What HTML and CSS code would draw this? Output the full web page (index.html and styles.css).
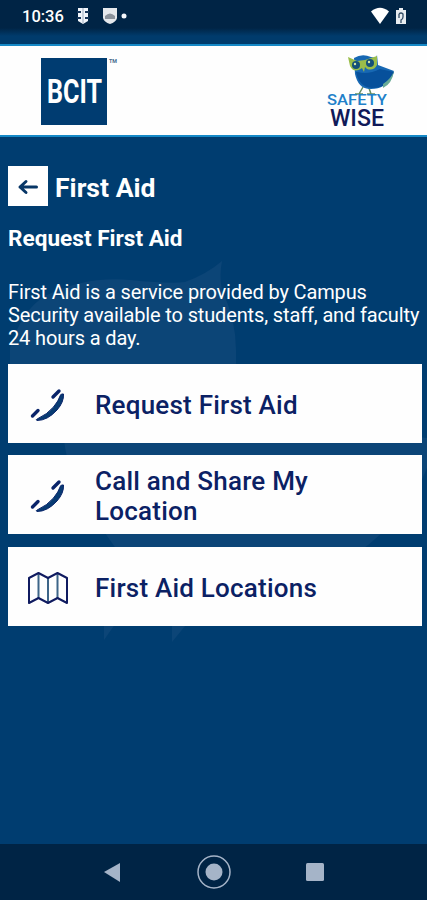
FILE: index.html
```html
<!DOCTYPE html>
<html lang="en">

<head>
    <meta charset="UTF-8">
    <meta name="viewport" content="width=device-width, initial-scale=1.0">
    <title>BCIT Safety Wise - First Aid</title>
    <link rel="stylesheet" href="styles.css">
</head>

<body>
    <div class="status-bar">
        <span class="clock">10:36</span>
        <svg class="status-icons" width="52" height="20" viewBox="0 0 52 20">
            <path d="M1 1h10v13l-5 3-5-3z" fill="#f1f5fa" />
            <path d="M0 5h4M8 5h4M0 11h4M8 11h4" stroke="#17365a" stroke-width="2" />
            <path d="M6 1v15" stroke="#9dabbd" stroke-width="1" />
            <path d="M26 1h14v10q-1 4-7 6-6-2-7-6z" fill="#e5e8ec" />
            <path d="M28 9q5-5 10 0v3H28z" fill="#8b929b" />
            <circle cx="47" cy="9" r="2.500" fill="#f4f7fb" />
        </svg>
        <svg class="status-right" width="36" height="20" viewBox="0 0 36 20">
            <path d="M0 4.500Q9-3 18 4.500L9 17z" fill="#fff" />
            <path d="M28 1h4v2h3v14H25V3h3z" fill="#e9edf1" />
            <path d="M28 7q2-2 4 0v3q0 2-2 3v3M28 7v4" fill="none" stroke="#334c65" stroke-width="1.300" />
        </svg>
    </div>

    <header class="header">
        <svg class="bcit-logo" width="78" height="70" viewBox="0 0 78 70">
            <rect y="2" width="66" height="67" fill="#003c71" />
            <text class="bcit-text" x="6" y="47" textLength="55" lengthAdjust="spacingAndGlyphs">BCIT</text>
            <text class="tm" x="68" y="7" textLength="8" lengthAdjust="spacingAndGlyphs">TM</text>
        </svg>
        <svg class="safety-logo" width="74" height="80" viewBox="0 0 74 80">
            <path d="M37 34l-4 7M43 35l2 6M29 41h8M41 41h8" stroke="#648d62" stroke-width="1.500" fill="none" />
            <path d="M28 5Q36 0 45 4l5 1 1-3 1 10 16 6-2 5q-7 14-23 13-11-1-14-15z" fill="#1768b3" />
            <path d="M32 19q10 3 22-3l14 3q-5 16-22 16-13-1-16-16z" fill="#07509b" />
            <path d="M57 31q8-5 11-13-2 13-11 17z" fill="#68aa96" />
            <path d="M22 4l9 4 8-1 12-4v9q-3 6-10 4l-2-2-1 5-2-4q-8 6-12-2z" fill="#9abd4a" />
            <circle cx="30" cy="12" r="4" fill="#145079" />
            <circle cx="44" cy="10" r="4" fill="#145079" />
            <circle cx="29" cy="11" r="1.200" fill="#d7e8a4" />
            <circle cx="43" cy="9" r="1.200" fill="#d7e8a4" />
            <text class="safety-text" x="1" y="52" textLength="60" lengthAdjust="spacingAndGlyphs">SAFETY</text>
            <text class="wise-text" x="4" y="73" textLength="54" lengthAdjust="spacingAndGlyphs">WISE</text>
        </svg>
    </header>

    <main class="content">
        <!-- faint owl behind the page -->
        <svg class="owl" width="427" height="400" viewBox="0 0 427 400">
            <path d="M222 11Q219 26 222 40q14 30 14 60v16l80 60 111 12v30q-20 50-72 87L344 310H124L105 283Q70 240 64 190L10 118V98Q22 60 45 46q40-20 85-16 40 4 55 2 22-8 37-21z" />
            <path d="M104 370h14l-14 20zM172 370h18l-18 22z" />
        </svg>

        <div class="title-row">
            <button class="back" aria-label="Back">
                <svg width="22" height="20" viewBox="0 0 22 20">
                    <path d="M19.500 10H3M9 4.500L3 10l6 5.500" />
                </svg>
            </button>
            <h1>First Aid</h1>
        </div>
        <h2>Request First Aid</h2>
        <p>First Aid is a service provided by Campus<br>Security available to students, staff, and faculty<br>24 hours a day.</p>

        <div class="menu">
            <button class="menu-item">
                <svg class="menu-icon" width="40" height="40" viewBox="0 0 40 40">
                    <path class="phone" d="M35.500 9q.5 8-6.500 16Q19.500 35.500 9 35.500q-2-.5 1-2 9-4 15.500-11.500 5-6 7-12 .5-1.500 3-1z" />
                    <path class="phone-lines" d="M25 12l6-6M4.500 31l5.500-5.500" />
                </svg>
                <span>Request First Aid</span>
            </button>
            <button class="menu-item">
                <svg class="menu-icon" width="40" height="40" viewBox="0 0 40 40">
                    <path class="phone" d="M35.500 9q.5 8-6.500 16Q19.500 35.500 9 35.500q-2-.5 1-2 9-4 15.500-11.500 5-6 7-12 .5-1.500 3-1z" />
                    <path class="phone-lines" d="M25 12l6-6M4.500 31l5.500-5.500" />
                </svg>
                <span>Call and Share My<br>Location</span>
            </button>
            <button class="menu-item">
                <svg class="menu-icon" width="40" height="40" viewBox="0 0 40 40">
                    <path class="fold" d="M10.500 5v25M20 10v25M29.500 5v25" />
                    <path class="map" d="M1 10l9.500-5 9.500 5 9.500-5 9.500 5v25l-9.500-5-9.500 5-9.500-5L1 35z" />
                </svg>
                <span>First Aid Locations</span>
            </button>
        </div>
    </main>

    <nav class="nav-bar">
        <svg width="427" height="56" viewBox="0 0 427 56">
            <path d="M104 28l16-9v19z" />
            <circle class="home-ring" cx="214" cy="28" r="16" />
            <circle cx="214" cy="28" r="8.500" />
            <rect x="306" y="19" width="18" height="18" rx="1.500" />
        </svg>
    </nav>
</body>

</html>
```
FILE: styles.css
```css
* {
    box-sizing: border-box;
}

body {
    margin: 0;
    height: 900px;
    display: flex;
    flex-direction: column;
    overflow: hidden;
    background: #003d70;
    color: #fff;
    font-family: Roboto, "Liberation Sans", sans-serif;
}

.status-bar {
    height: 44px;
    display: flex;
    align-items: flex-start;
    padding: 7px 20px 0 22px;
    background: linear-gradient(#002445 28px, #003b6c 36px);
}

.clock {
    font-size: 16.5px;
    line-height: 20px;
    font-weight: 500;
    width: 55px;
}

.status-right {
    margin-left: auto;
}

.header {
    height: 93px;
    display: flex;
    justify-content: space-between;
    align-items: flex-start;
    padding: 9px 27px 0 41px;
    background: #fefefe;
    border-top: 2px solid #1589c7;
    border-bottom: 2px solid #1589c7;
}

.bcit-logo {
    margin-top: 1px;
    overflow: visible;
}

.bcit-text {
    font: bold 33px Roboto, sans-serif;
    fill: #fff;
}

.tm {
    font: bold 6px Roboto, sans-serif;
    fill: #456b8f;
}

.safety-logo {
    margin-top: -2px;
    overflow: visible;
}

.safety-text {
    font: 500 15px/1 Roboto, sans-serif;
    fill: #2180c9;
}

.wise-text {
    font: 500 23px/1 Roboto, sans-serif;
    fill: #101a59;
}

.content {
    position: relative;
    flex: 1;
    padding: 29px 5px 0 8px;
}

.owl {
    position: absolute;
    top: 113px;
    left: 0;
    fill: #0c4577;
}

.title-row,
h2,
p,
.menu {
    position: relative;
}

.title-row {
    display: flex;
    align-items: center;
    gap: 7px;
    height: 40px;
}

.back {
    width: 40px;
    height: 40px;
    padding: 5px 0 0;
    border: none;
    border-radius: 0;
    background: #fff;
}

.back svg {
    fill: none;
    stroke: #073666;
    stroke-width: 3;
    stroke-linecap: round;
    stroke-linejoin: round;
}

h1 {
    margin: 4px 0 0;
    font-size: 26.6px;
    line-height: 32px;
    font-weight: 700;
}

h2 {
    margin: 19px 0 0;
    font-size: 22.6px;
    line-height: 28px;
    font-weight: 700;
}

p {
    margin: 28px 0 0;
    font-size: 20px;
    line-height: 23px;
    letter-spacing: -0.14px;
    white-space: nowrap;
}

.menu {
    display: flex;
    flex-direction: column;
    gap: 12.4px;
    margin-top: 14px;
}

.menu-item {
    display: flex;
    align-items: center;
    height: 79px;
    padding: 3px 20px 0;
    border: none;
    background: #fefefe;
    color: #0b2164;
    font-family: inherit;
    font-size: 26px;
    line-height: 30.5px;
    letter-spacing: 0.22px;
    font-weight: 500;
    text-align: left;
}

.menu-icon {
    flex: none;
    margin-right: 27px;
}

.phone {
    fill: #073b73;
    stroke: #09246a;
}

.phone-lines {
    stroke: #09246a;
    stroke-width: 3.4;
    stroke-linecap: round;
}

.map {
    fill: none;
    stroke: #101b60;
    stroke-width: 2;
    stroke-linejoin: round;
}

.fold {
    stroke: #3d6588;
    stroke-width: 2;
}

.nav-bar {
    height: 56px;
    background: #002445;
}

.nav-bar svg {
    display: block;
    fill: #a5b4c8;
}

.nav-bar .home-ring {
    fill: none;
    stroke: #a5b4c8;
    stroke-width: 1.5;
}
```
